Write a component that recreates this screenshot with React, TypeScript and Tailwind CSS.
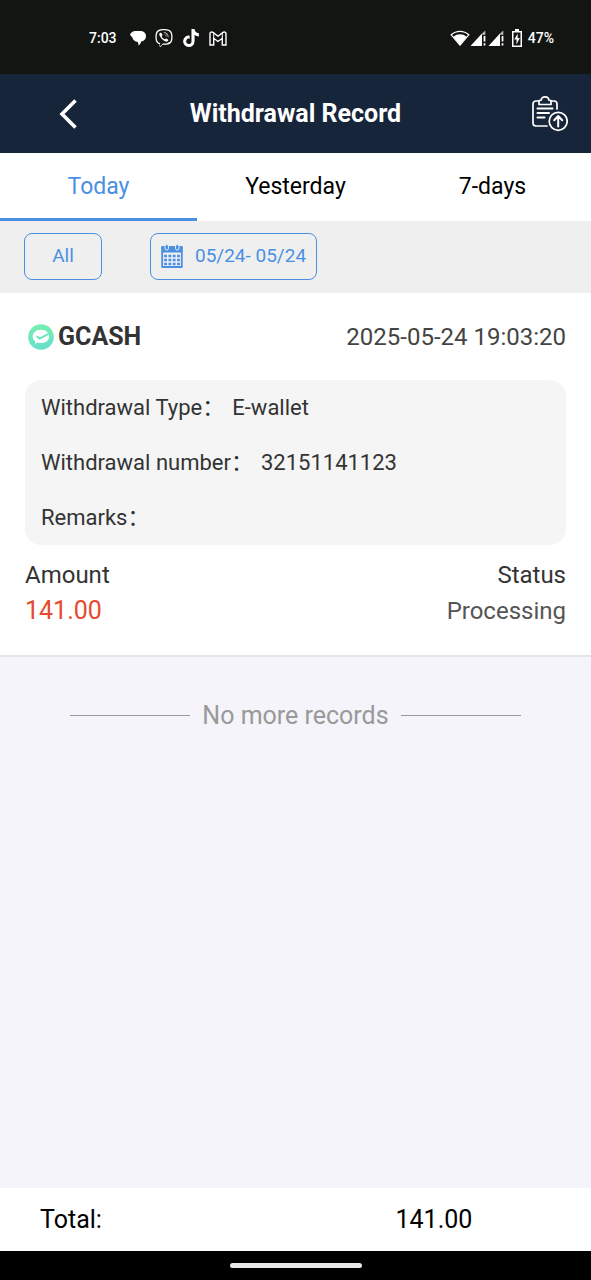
import React, { useState } from "react";
import { FaViber, FaTiktok } from "react-icons/fa6";

type WithdrawalRecord = {
  id: string;
  channel: string;
  createdAt: string;
  type: string;
  number: string;
  remarks: string;
  amount: number;
  status: string;
};

const TABS = ["Today", "Yesterday", "7-days"];

const RECORDS: WithdrawalRecord[] = [
  {
    id: "1",
    channel: "GCASH",
    createdAt: "2025-05-24 19:03:20",
    type: "E-wallet",
    number: "32151141123",
    remarks: "",
    amount: 141,
    status: "Processing",
  },
];

function ChatIcon() {
  return (
    <svg width="16" height="16" viewBox="0 0 16 16" fill="currentColor" aria-hidden>
      <path d="M5.5 1h5C13.800 1 16 3.200 16 6.200c0 2.900-2 4.900-4.800 5.300-.4 1.800-1.300 3-2.700 3.900 0-1.200-.2-2.300-.7-3.500C5 11.600 2.800 10 2.500 7.800L0 4.800C.8 2.500 2.800 1 5.500 1z" />
    </svg>
  );
}

function MailIcon() {
  return (
    <svg width="18" height="15" viewBox="0 0 18 15" fill="none" stroke="currentColor" strokeWidth="1.4" aria-hidden>
      <path d="M1 2.6C1 1 2.800.5 4 1.400l5 3.800 5-3.800c1.200-.9 3-.4 3 1.200V14h-3.700V7.300L9 10.500 4.700 7.300V14H1z" />
      <path d="M4.700 7.300V2.200M13.300 7.300V2.200" strokeWidth="1" />
    </svg>
  );
}

function WifiIcon() {
  return (
    <svg width="20" height="16" viewBox="0 0 20 16" aria-hidden>
      <path d="M1.200 4.800C6.400.2 13.600.2 18.800 4.800L10 15.200z" fill="none" stroke="currentColor" strokeWidth="1.2" />
      <path d="M3.300 6.700c4-3.300 9.400-3.300 13.400 0L10 15z" fill="currentColor" />
    </svg>
  );
}

function SignalIcon() {
  return (
    <svg width="18" height="16" viewBox="0 0 18 16" aria-hidden>
      <path d="M.5 16L12 3.500V16z" fill="currentColor" />
      <path d="M11 4.500L15.300.5V5" fill="currentColor" opacity=".7" />
      <path d="M14.500 6v5.500M14.500 13.200V15.500" stroke="currentColor" strokeWidth="1.800" />
    </svg>
  );
}

function BatteryIcon() {
  return (
    <svg width="10" height="18" viewBox="0 0 10 18" aria-hidden>
      <path d="M3 0h4v2h3v16H0V2h3z" fill="currentColor" />
      <path d="M1.500 3.500h7v13h-7z" fill="#131512" />
      <path d="M5.700 4.500L2.300 10.500h2.200V15.500l3.300-6.500H5.700z" fill="currentColor" />
    </svg>
  );
}

function ClipboardIcon() {
  return (
    <svg
      width="36"
      height="36"
      viewBox="0 0 36 36"
      fill="none"
      stroke="currentColor"
      strokeWidth="1.700"
      strokeLinecap="round"
      strokeLinejoin="round"
      aria-hidden
    >
      <path d="M7 5H4a3 3 0 0 0-3 3v19a3 3 0 0 0 3 3h11M19 5h3a3 3 0 0 1 3 3v5" />
      <path d="M7 8.500V5.300C7 4.300 8 4 9.300 4 9.300-.2 16.700-.2 16.700 4 18 4 19 4.300 19 5.300v3.200z" />
      <path d="M5.500 12.500h15M5.500 17h11.500M5.500 21.500h7" strokeWidth="2" />
      <circle cx="26.200" cy="25.300" r="9" />
      <path d="M26.200 30.500v-10M22.200 24.200l4-4.200 4 4.200" strokeWidth="2" />
    </svg>
  );
}

function CalendarIcon() {
  return (
    <svg width="22" height="24" viewBox="0 0 22 24" aria-hidden>
      <path d="M1.200 3h19.600v20H1.200z" fill="none" stroke="currentColor" strokeWidth="1.800" strokeLinejoin="round" />
      <path d="M.5 2.500h21V8.500H.5z" fill="currentColor" />
      <g fill="currentColor" stroke="#efefef">
        <rect x="4" y=".5" width="3.500" height="5.500" rx="1.700" />
        <rect x="14.500" y=".5" width="3.500" height="5.500" rx="1.700" />
      </g>
      <g stroke="currentColor" strokeWidth="2.600" strokeDasharray="2.800 1.500">
        <path d="M3.200 12h16M3.200 16h16M3.200 20h16" />
      </g>
    </svg>
  );
}

function WalletLogo() {
  return (
    <svg width="26" height="26" viewBox="0 0 26 26" aria-hidden>
      <defs>
        <linearGradient id="logo" x1="0" y1="0" x2="0" y2="1">
          <stop offset="0" stopColor="#76efae" />
          <stop offset="1" stopColor="#66dfcd" />
        </linearGradient>
      </defs>
      <circle cx="13" cy="13" r="12.800" fill="url(#logo)" />
      <path
        d="M13 5.800c4.700 0 8.200 2.900 8.200 6.600s-3.500 6.600-8.200 6.600c-1.100 0-2.100-.1-3-.5l-3 1.300.4-2.500c-1.800-1.200-2.700-2.900-2.700-4.900 0-3.700 3.600-6.600 8.300-6.600z"
        fill="#fff"
      />
      <path d="M8.700 12.300l2.900 2.300 9-4.800" fill="none" stroke="#69e6bf" strokeWidth="2" />
    </svg>
  );
}

function Detail({ label, value }: { label: string; value: string }) {
  return (
    <div className="flex h-[55px] items-center">
      <dt>{label}：</dt>
      <dd className="ml-2">{value}</dd>
    </div>
  );
}

function RecordCard({ record }: { record: WithdrawalRecord }) {
  return (
    <article className="border-b-2 border-[#e5e5e8] bg-white px-[25px] pb-[26px] text-[#333]">
      <div className="flex h-[87px] items-center justify-between">
        <h2 className="flex items-center gap-1 pl-[3px] text-[25px] font-bold">
          <WalletLogo />
          {record.channel}
        </h2>
        <time className="text-[24px] text-[#444]">{record.createdAt}</time>
      </div>
      <dl className="rounded-2xl bg-[#f5f5f5] px-4 text-[22px]">
        <Detail label="Withdrawal Type" value={record.type} />
        <Detail label="Withdrawal number" value={record.number} />
        <Detail label="Remarks" value={record.remarks} />
      </dl>
      <div className="mt-3 flex justify-between text-[24px] leading-9">
        <div>
          <div>Amount</div>
          <div className="text-[25px] text-[#e64a2e]">{record.amount.toFixed(2)}</div>
        </div>
        <div className="text-right">
          <div>Status</div>
          <div className="text-[#555]">{record.status}</div>
        </div>
      </div>
    </article>
  );
}

export default function App() {
  const [tab, setTab] = useState(TABS[0]);
  const total = RECORDS.reduce((sum, r) => sum + r.amount, 0);

  return (
    <div className="flex min-h-screen flex-col bg-[#f4f4fa] font-['Roboto','Noto_Sans_CJK_SC',sans-serif] leading-normal">
      <div className="flex h-[74px] items-center justify-between bg-[#131512] pt-[2px] pr-[37px] pl-[89px] text-[14px] font-medium text-white">
        <div className="flex items-center gap-[9px]">
          <span className="mr-1">7:03</span>
          <ChatIcon />
          <FaViber size={18} />
          <FaTiktok size={18} />
          <MailIcon />
        </div>
        <div className="flex items-center">
          <WifiIcon />
          <SignalIcon />
          <SignalIcon />
          <span className="mx-[6px]">
            <BatteryIcon />
          </span>
          <span>47%</span>
        </div>
      </div>

      <header className="grid h-[79px] grid-cols-[1fr_auto_1fr] items-center bg-[#17253a] px-[23px] text-white">
        <button type="button" aria-label="Back" className="justify-self-start pl-9">
          <svg width="18" height="30" viewBox="0 0 18 30" fill="none" stroke="currentColor" strokeWidth="3.600" aria-hidden>
            <path d="M16.500 1.500L3 15l13.500 13.500" />
          </svg>
        </button>
        <h1 className="text-[25px] font-bold">Withdrawal Record</h1>
        <button type="button" aria-label="Export records" className="justify-self-end">
          <ClipboardIcon />
        </button>
      </header>

      <nav className="grid h-[68px] grid-cols-3 bg-white text-[23px]">
        {TABS.map((t) => (
          <button
            key={t}
            type="button"
            onClick={() => setTab(t)}
            className={`border-b-3 pt-1 ${
              t === tab ? "border-[#4a90e2] text-[#4a90e2]" : "border-transparent text-black"
            }`}
          >
            {t}
          </button>
        ))}
      </nav>

      <div className="flex h-[72px] items-center gap-12 bg-[#efefef] px-6 pb-[2px] text-[19px] text-[#4a90e2]">
        <button type="button" className="h-[47px] w-[78px] rounded-lg border border-[#4a90e2]">
          All
        </button>
        <button
          type="button"
          className="flex h-[47px] items-center gap-3 rounded-lg border border-[#4a90e2] px-[10px]"
        >
          <CalendarIcon />
          05/24- 05/24
        </button>
      </div>

      <main className="grow">
        {RECORDS.map((r) => (
          <RecordCard key={r.id} record={r} />
        ))}
        <div className="mt-10 flex items-center justify-center gap-3 text-[25px] text-[#999]">
          <span className="h-px w-[120px] bg-[#999]" />
          No more records
          <span className="h-px w-[120px] bg-[#999]" />
        </div>
      </main>

      <footer>
        <div className="grid h-[63px] grid-cols-2 items-center bg-white px-10 text-[25px] text-black">
          <span>Total:</span>
          <span className="pl-[100px]">{total.toFixed(2)}</span>
        </div>
        <div className="flex h-[29px] items-center justify-center bg-black">
          <span className="h-[5px] w-[132px] rounded-full bg-[#e8e8e8]" />
        </div>
      </footer>
    </div>
  );
}
